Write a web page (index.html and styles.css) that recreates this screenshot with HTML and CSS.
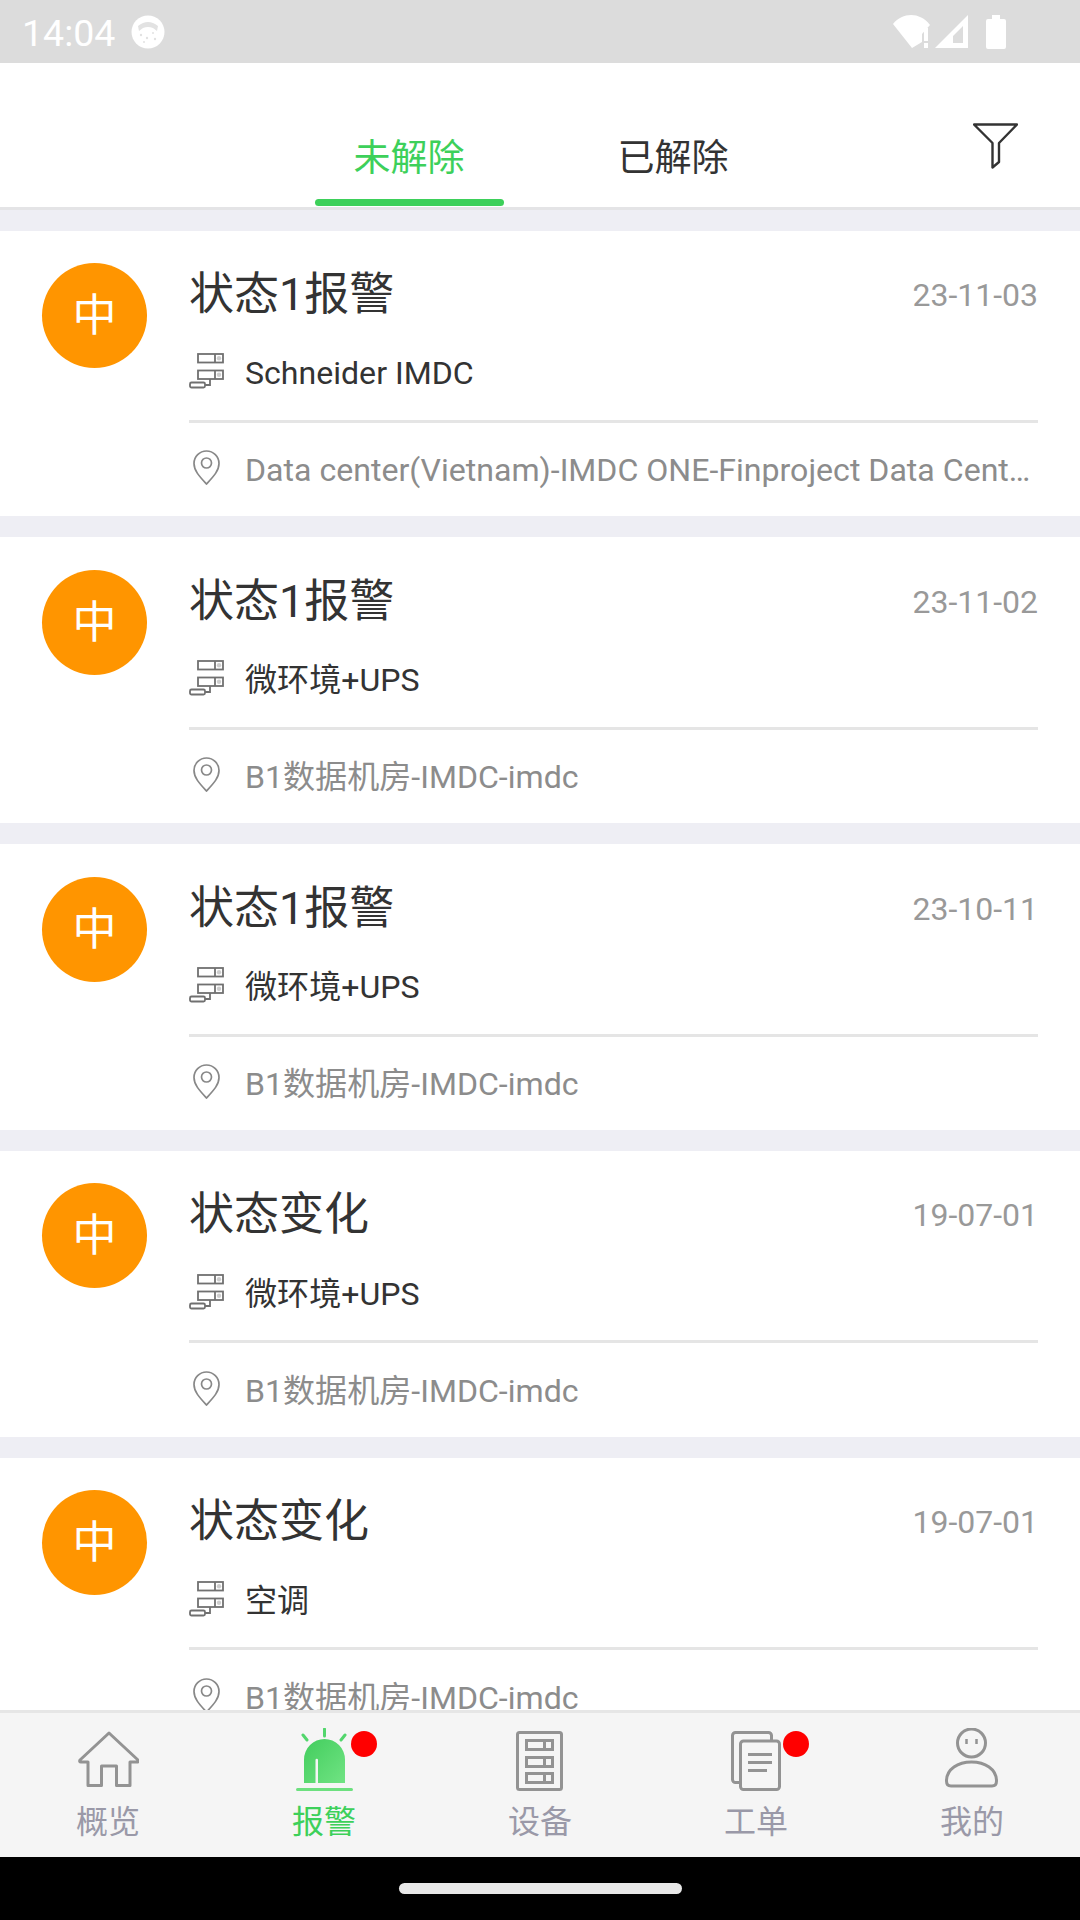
FILE: index.html
```html
<!DOCTYPE html>
<html lang="en">
<head>
  <meta charset="UTF-8" />
  <title>报警</title>
  <link rel="stylesheet" href="styles.css">
</head>
<body>

  <svg class="defs" width="0" height="0">
    <defs>
      <symbol id="icServer" viewBox="0 0 35 36">
        <g fill="none" stroke="#707070" stroke-width="1.8">
          <rect x="9" y="1" width="25" height="8.5" />
          <rect x="9" y="17.5" width="25" height="8.5" />
          <rect x="1" y="29.5" width="15" height="5" rx="1.5" />
          <path d="M21 26v6h-5" />
          <path d="M26 1v8.5M26 17.5v8.5" />
        </g>
        <circle cx="30" cy="5.2" r="2.2" fill="#707070" opacity=".35" />
        <circle cx="30" cy="21.7" r="2.2" fill="#707070" opacity=".35" />
      </symbol>
      <symbol id="icPin" viewBox="0 0 27 35">
        <g fill="none" stroke="#888" stroke-width="1.7">
          <path d="M13.5 34C7 27 1 21 1 13.5a12.5 12.5 0 0 1 25 0C26 21 20 27 13.5 34Z" />
          <circle cx="13.5" cy="13" r="5" />
        </g>
      </symbol>
      <linearGradient id="alarmFill" x1="0" y1="0" x2="1" y2="1">
        <stop offset="0" stop-color="#42cd5d" />
        <stop offset="1" stop-color="#70e383" />
      </linearGradient>
    </defs>
  </svg>

  <!-- STATUS BAR -->
  <div class="status-bar">
    <div class="status-left">
      <span class="status-time">14:04</span>
      <svg class="ic-cat" viewBox="0 0 34 34">
        <circle cx="17" cy="17" r="16.5" fill="#fff" />
        <path d="M7 11Q17 3 27 11L26 16L22 13Q17 11 12 13L8 16Z" fill="#e2e2e2" />
        <g fill="#e2e2e2">
          <circle cx="10" cy="20" r="1.2" />
          <circle cx="16" cy="23" r="1.2" />
          <circle cx="22" cy="18" r="1" />
          <circle cx="24" cy="24" r="1.2" />
          <circle cx="13" cy="27" r="1" />
        </g>
      </svg>
    </div>
    <div class="status-right">
      <svg class="ic-wifi" viewBox="0 0 42 33">
        <path d="M0 9C10-3 27-3 37 10L29 19V27L19 33Z" fill="#fff" />
        <path d="M31 13h4v13h-4zM31 28h4v5h-4z" fill="#fff" />
      </svg>
      <svg class="ic-signal" viewBox="0 0 33 33">
        <path fill-rule="evenodd" d="M33 0V33H0ZM28 11L18 21V28H28Z" fill="#fff" />
      </svg>
      <svg class="ic-battery" viewBox="0 0 20 34">
        <path d="M6 0h8v4h4a2 2 0 0 1 2 2v26a2 2 0 0 1-2 2H2a2 2 0 0 1-2-2V6a2 2 0 0 1 2-2h4Z" fill="#fff" />
      </svg>
    </div>
  </div>

  <!-- TABS -->
  <div class="tabs">
    <div class="tab active">未解除</div>
    <div class="tab">已解除</div>
    <svg class="ic-filter" viewBox="0 0 45 46">
      <path d="M1 1.5H44L26 20V39L19.5 44.5V20Z" fill="none" stroke="#333" stroke-width="2.4" stroke-linejoin="round" />
    </svg>
  </div>

  <!-- ALARM LIST -->
  <div class="list">

    <div class="card">
      <div class="level">中</div>
      <div class="card-body">
        <div class="card-head">
          <span class="card-title">状态1报警</span>
          <span class="card-date">23-11-03</span>
        </div>
        <div class="card-row row-device">
          <svg class="ic-server"><use href="#icServer" /></svg>
          <span class="row-text">Schneider IMDC</span>
        </div>
        <div class="card-row row-place">
          <svg class="ic-pin"><use href="#icPin" /></svg>
          <span class="row-text">Data center(Vietnam)-IMDC ONE-Finproject Data Center-Schneider IMDC Room</span>
        </div>
      </div>
    </div>

    <div class="card">
      <div class="level">中</div>
      <div class="card-body">
        <div class="card-head">
          <span class="card-title">状态1报警</span>
          <span class="card-date">23-11-02</span>
        </div>
        <div class="card-row row-device">
          <svg class="ic-server"><use href="#icServer" /></svg>
          <span class="row-text">微环境+UPS</span>
        </div>
        <div class="card-row row-place">
          <svg class="ic-pin"><use href="#icPin" /></svg>
          <span class="row-text">B1数据机房-IMDC-imdc</span>
        </div>
      </div>
    </div>

    <div class="card">
      <div class="level">中</div>
      <div class="card-body">
        <div class="card-head">
          <span class="card-title">状态1报警</span>
          <span class="card-date">23-10-11</span>
        </div>
        <div class="card-row row-device">
          <svg class="ic-server"><use href="#icServer" /></svg>
          <span class="row-text">微环境+UPS</span>
        </div>
        <div class="card-row row-place">
          <svg class="ic-pin"><use href="#icPin" /></svg>
          <span class="row-text">B1数据机房-IMDC-imdc</span>
        </div>
      </div>
    </div>

    <div class="card">
      <div class="level">中</div>
      <div class="card-body">
        <div class="card-head">
          <span class="card-title">状态变化</span>
          <span class="card-date">19-07-01</span>
        </div>
        <div class="card-row row-device">
          <svg class="ic-server"><use href="#icServer" /></svg>
          <span class="row-text">微环境+UPS</span>
        </div>
        <div class="card-row row-place">
          <svg class="ic-pin"><use href="#icPin" /></svg>
          <span class="row-text">B1数据机房-IMDC-imdc</span>
        </div>
      </div>
    </div>

    <div class="card">
      <div class="level">中</div>
      <div class="card-body">
        <div class="card-head">
          <span class="card-title">状态变化</span>
          <span class="card-date">19-07-01</span>
        </div>
        <div class="card-row row-device">
          <svg class="ic-server"><use href="#icServer" /></svg>
          <span class="row-text">空调</span>
        </div>
        <div class="card-row row-place">
          <svg class="ic-pin"><use href="#icPin" /></svg>
          <span class="row-text">B1数据机房-IMDC-imdc</span>
        </div>
      </div>
    </div>

  </div>

  <!-- BOTTOM NAV -->
  <div class="nav">
    <div class="nav-item">
      <div class="nav-icon">
        <svg class="ic-home" viewBox="0 0 61 56">
          <path d="M31 2L2 29q-1 2 1 2H10V54.500H23.500V35H38.500V54.500H52V31H59q2 0 1-2Z" fill="none" stroke="#939393" stroke-width="3" stroke-linejoin="round" />
        </svg>
      </div>
      <span>概览</span>
    </div>
    <div class="nav-item active">
      <div class="nav-icon">
        <svg class="ic-alarm" viewBox="0 0 57 63">
          <path d="M8 55V31.500a20.500 20.500 0 0 1 41 0V55H22V32a1.250 1.250 0 0 0-2.500 0V55Z" fill="url(#alarmFill)" />
          <rect y="60" width="57" height="3" rx="1.500" fill="#6de07f" />
          <path d="M28.500 1V8M7 7l4 5M49 7l-4 5" stroke="#52d66c" stroke-width="3" stroke-linecap="round" />
        </svg>
      </div>
      <span>报警</span>
      <i class="badge"></i>
    </div>
    <div class="nav-item">
      <div class="nav-icon">
        <svg class="ic-rack" viewBox="0 0 47 60">
          <rect x="1.500" y="1.500" width="44" height="57" rx="2" fill="none" stroke="#939393" stroke-width="3" />
          <g fill="none" stroke="#939393" stroke-width="3">
            <rect x="10.500" y="9.500" width="26" height="9" />
            <rect x="10.500" y="26.500" width="26" height="9" />
            <rect x="10.500" y="42.500" width="26" height="9" />
          </g>
          <g fill="#939393">
            <rect x="27" y="9" width="3" height="10" />
            <rect x="27" y="26" width="3" height="10" />
            <rect x="27" y="42" width="3" height="10" />
          </g>
        </svg>
      </div>
      <span>设备</span>
    </div>
    <div class="nav-item">
      <div class="nav-icon">
        <svg class="ic-doc" viewBox="0 0 50 60">
          <rect x="1.500" y="1.500" width="39" height="50" rx="3" fill="none" stroke="#939393" stroke-width="3" />
          <rect x="9.500" y="10" width="39" height="48.500" rx="3" fill="#f5f5f5" stroke="#939393" stroke-width="3" />
          <path d="M17 23.500H41M17 31.500H41M17 39.500H36" stroke="#939393" stroke-width="3" />
        </svg>
      </div>
      <span>工单</span>
      <i class="badge"></i>
    </div>
    <div class="nav-item">
      <div class="nav-icon">
        <svg class="ic-user" viewBox="0 0 53 60">
          <circle cx="26.500" cy="15" r="14" fill="none" stroke="#939393" stroke-width="3" />
          <path d="M21.500 11v5M31.500 11v5" stroke="#939393" stroke-width="2.500" />
          <path d="M1.500 53C1.500 41 13 34 26.500 34S51.500 41 51.500 53Q51.500 58 47 58H6Q1.500 58 1.500 53Z" fill="none" stroke="#939393" stroke-width="3" />
        </svg>
      </div>
      <span>我的</span>
    </div>
  </div>

  <!-- GESTURE BAR -->
  <div class="gesture-bar">
    <div class="gesture-pill"></div>
  </div>

</body>
</html>
```

FILE: styles.css
```css
* {
  box-sizing: border-box;
  margin: 0;
  padding: 0;
}

body {
  width: 1080px;
  height: 1920px;
  overflow: hidden;
  display: flex;
  flex-direction: column;
  font-family: Roboto, "Noto Sans CJK SC", sans-serif;
  background: #eeeef4;
  color: #333;
}

.defs {
  position: absolute;
}

/* status bar */
.status-bar {
  flex: none;
  height: 63px;
  background: #dcdcdc;
  color: #fff;
  display: flex;
  justify-content: space-between;
  align-items: center;
  padding: 0 74px 0 22px;
}

.status-left,
.status-right {
  display: flex;
  align-items: center;
}

.status-time {
  font-size: 37.5px;
  line-height: 63px;
  padding-top: 3px;
}

.ic-cat {
  width: 34px;
  height: 34px;
  margin-left: 16px;
}

.ic-wifi {
  width: 42px;
  height: 33px;
}

.ic-signal {
  width: 33px;
  height: 33px;
  margin-right: 18px;
}

.ic-battery {
  width: 20px;
  height: 34px;
}

/* tabs */
.tabs {
  flex: none;
  height: 147px;
  background: #fff;
  border-bottom: 3px solid #e4e4e6;
  display: flex;
  padding-left: 277px;
  position: relative;
}

.tab {
  width: 264px;
  font-size: 37px;
  line-height: 50px;
  padding-top: 71px;
  text-align: center;
  color: #333;
  position: relative;
}

.tab.active {
  color: #3dd05a;
}

.tab.active::after {
  content: "";
  position: absolute;
  left: 38px;
  bottom: 1px;
  width: 189px;
  height: 7px;
  border-radius: 4px;
  background: #3dd05a;
}

.ic-filter {
  width: 45px;
  height: 46px;
  margin: 60px 62px 0 auto;
}

/* list */
.list {
  flex: 1;
  min-height: 0;
  overflow: hidden;
  padding-top: 20.6px;
  display: flex;
  flex-direction: column;
  gap: 21px;
}

.card {
  flex: none;
  height: 285.8px;
  background: #fff;
  display: flex;
  padding: 32.4px 42px 0;
}

.level {
  flex: none;
  width: 105px;
  height: 105px;
  border-radius: 50%;
  background: #ff9500;
  color: #fff;
  font-size: 44px;
  line-height: 107px;
  text-align: center;
}

.card-body {
  flex: 1;
  min-width: 0;
  margin-left: 42px;
}

.card-head {
  height: 64px;
  display: flex;
  justify-content: space-between;
  align-items: center;
}

.card-title {
  font-size: 45px;
  line-height: 60px;
  color: #333;
}

.card-date {
  font-size: 32px;
  color: #999;
}

.card-row {
  display: flex;
  align-items: center;
}

.row-device {
  height: 96px;
  border-bottom: 3px solid #e5e5e5;
}

.row-place {
  height: 96px;
  padding-bottom: 1px;
}

.row-text {
  flex: 1;
  min-width: 0;
  font-size: 32.1px;
  line-height: 44px;
  white-space: nowrap;
  overflow: hidden;
  text-overflow: ellipsis;
}

.row-device .row-text {
  color: #333;
}

.row-place .row-text {
  color: #8c8c8c;
}

.ic-server {
  flex: none;
  width: 35px;
  height: 36px;
  margin: 0 21px 4px 0;
}

.ic-pin {
  flex: none;
  width: 27px;
  height: 35px;
  margin: 0 25px 5px 4px;
}

/* bottom nav */
.nav {
  flex: none;
  height: 147px;
  background: #f5f5f5;
  border-top: 3px solid #e6e6e6;
  display: flex;
}

.nav-item {
  flex: 1;
  position: relative;
  display: flex;
  flex-direction: column;
  align-items: center;
  padding-top: 14px;
  font-size: 32px;
  line-height: 40px;
  color: #9a99a8;
}

.nav-item.active {
  color: #3dd05a;
}

.nav-icon {
  height: 64px;
  margin-bottom: 11px;
  display: flex;
  align-items: flex-start;
  justify-content: center;
}

.ic-home {
  width: 61px;
  height: 56px;
  margin-top: 4px;
}

.ic-alarm {
  width: 57px;
  height: 63px;
  margin-top: 1px;
}

.ic-rack {
  width: 47px;
  height: 60px;
  margin: 4px 2px 0 0;
}

.ic-doc {
  width: 50px;
  height: 60px;
  margin-top: 4px;
}

.ic-user {
  width: 53px;
  height: 60px;
  margin: 1px 2px 0 0;
}

.badge {
  position: absolute;
  top: 18px;
  left: 135px;
  width: 26px;
  height: 26px;
  border-radius: 50%;
  background: #f00;
}

/* gesture bar */
.gesture-bar {
  flex: none;
  height: 63px;
  background: #000;
  display: flex;
  justify-content: center;
  padding-top: 26px;
}

.gesture-pill {
  width: 283px;
  height: 11px;
  border-radius: 6px;
  background: #e8e8e8;
}
```
